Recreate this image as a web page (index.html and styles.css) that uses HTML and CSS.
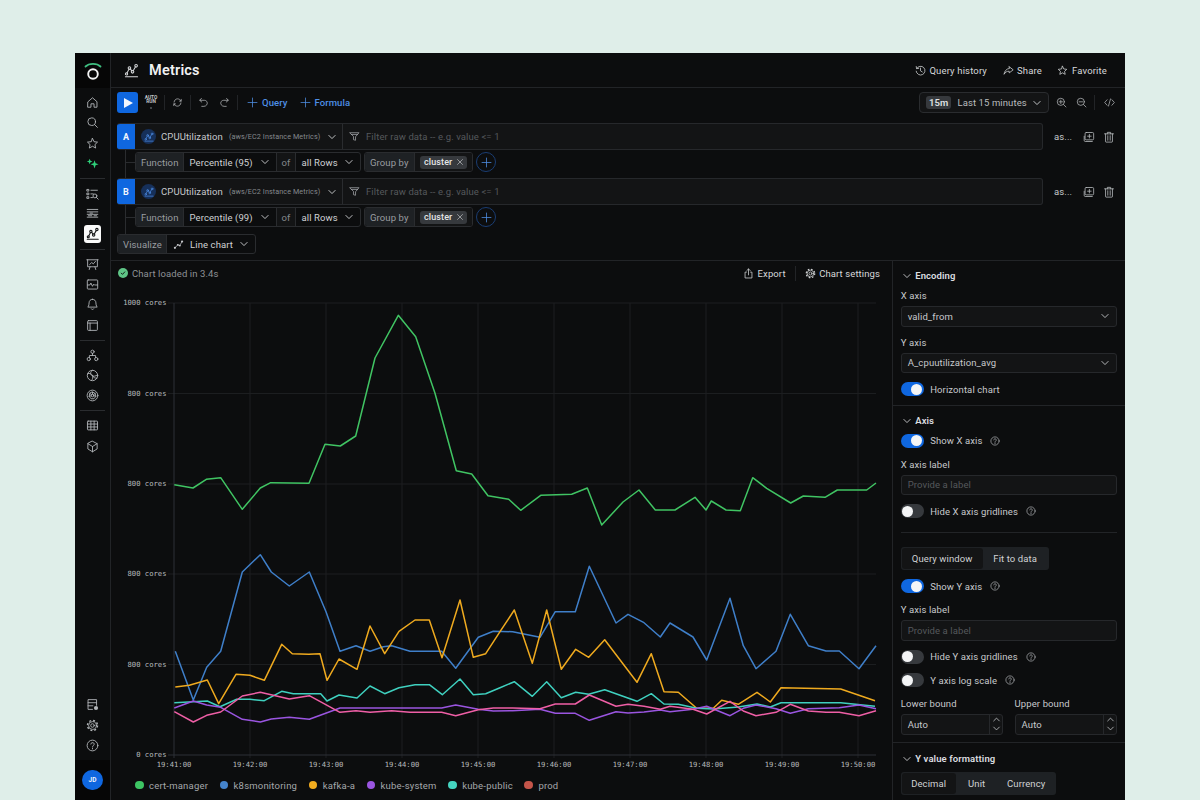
FILE: index.html
```html
<!DOCTYPE html>
<html lang="en">
<head>
<meta charset="utf-8">
<title>Metrics</title>
<link rel="stylesheet" href="styles.css">
</head>
<body>
<svg class="sprite" xmlns="http://www.w3.org/2000/svg">
  <defs>
    <symbol id="home" viewBox="0 0 16 16"><path d="M2.500 7 8 2.200 13.500 7v6.800H9.900V9.600H6.100v4.200H2.500z"/></symbol>
    <symbol id="search" viewBox="0 0 16 16"><circle cx="7" cy="7" r="4.700"/><path d="M10.500 10.500 14 14"/></symbol>
    <symbol id="star" viewBox="0 0 16 16"><path d="M8 1.800l1.900 4 4.300.5-3.200 3 .9 4.300L8 11.400l-3.900 2.200.9-4.300-3.200-3 4.300-.5z"/></symbol>
    <symbol id="sparkle" viewBox="0 0 16 16"><path class="solid" d="M10.500 4l1.300 3.700 3.700 1.300-3.700 1.300-1.300 3.700-1.300-3.700L5.500 9l3.700-1.300z"/><path class="solid" d="M4.500 2l1 2.500 2.500 1-2.500 1-1 2.500-1-2.500-2.500-1 2.500-1z"/></symbol>
    <symbol id="listsearch" viewBox="0 0 16 16"><path d="M1.500 3h2v2h-2zM1.500 7.500h2v2h-2zM1.500 12h2v2h-2zM6 4h8M6 8.500h3M6 13h2"/><circle cx="11" cy="11" r="2.400"/><path d="M12.800 12.800 15 15"/></symbol>
    <symbol id="rows" viewBox="0 0 16 16"><path d="M1.500 3h13M1.500 6h13M1.500 9h13M1.500 12.500h13M5 7.500h3M10 10.800h3M3 10.800h4"/></symbol>
    <symbol id="metrics" viewBox="0 0 16 16"><path d="M1.500 14.600h13M3.200 10.600 5.200 6.800M6.600 6.200l1.800 2.200M9.800 8.200l2.300-3.900"/><circle cx="2.700" cy="11.600" r="1.200"/><circle cx="5.800" cy="5.400" r="1.400"/><circle cx="9.100" cy="9.400" r="1.400"/><circle cx="12.900" cy="3" r="1.400"/></symbol>
    <symbol id="present" viewBox="0 0 16 16"><path d="M1 2.200h14M2 2.200v8.600h12V2.200M5 10.800 4 14.200M11 10.800l1 3.400M4.500 8l2.500-2.400 2 1.600 2.600-3"/></symbol>
    <symbol id="pulse" viewBox="0 0 16 16"><rect x="1.600" y="2.400" width="12.800" height="11.200" rx="1"/><path d="M1.800 8.600h3l1.200-2.400 2 4 1.400-2.600 1 1h3.800"/></symbol>
    <symbol id="bell" viewBox="0 0 16 16"><path d="M8 1.600c-2.700 0-4.200 2-4.200 4.400 0 3.600-1.600 5.200-1.600 5.200h11.600S12.200 9.600 12.200 6C12.200 3.600 10.700 1.600 8 1.600zM6.400 13.400c.3 1 2.900 1 3.200 0"/></symbol>
    <symbol id="panel" viewBox="0 0 16 16"><rect x="2" y="2" width="12" height="12" rx="1"/><path d="M2 5h12M5 5v9"/></symbol>
    <symbol id="tree" viewBox="0 0 16 16"><circle cx="8" cy="3.400" r="2"/><circle cx="3.400" cy="12.400" r="2"/><circle cx="12.600" cy="12.400" r="2"/><path d="M8 5.400v2.600M4.200 10.600V8h7.600v2.600"/></symbol>
    <symbol id="swirl" viewBox="0 0 16 16"><circle cx="8" cy="8" r="6.400"/><path d="M8 1.600c-3 2-3 5-1 6.400s5 1 6.900-.6M2.200 5.600c2.400-.6 5 .4 5.800 2.400s.4 4.800-1.400 6.300M13.500 11.300c-2.500.4-4.500-1-5.500-3.300"/></symbol>
    <symbol id="kube" viewBox="0 0 16 16"><circle cx="8" cy="8" r="6.600"/><path d="M8 3.800 11.300 5.400 12.100 9 9.800 12H6.200L3.900 9l.8-3.600z"/><circle cx="8" cy="8" r="1.600"/><path d="M8 3.800v2.600M4.700 5.400l2 1.600M11.300 5.400l-2 1.600M3.900 9l2.600-.6M12.100 9l-2.600-.6"/></symbol>
    <symbol id="grid" viewBox="0 0 16 16"><rect x="1.800" y="2.600" width="12.400" height="10.800" rx=".8"/><path d="M1.800 6.200h12.400M1.800 9.800h12.400M6 2.600v10.800M10 2.600v10.800"/></symbol>
    <symbol id="cube" viewBox="0 0 16 16"><path d="M8 1.500 13.700 4.500V11L8 14.500 2.300 11V4.500zM2.300 4.500 8 8l5.700-3.500M8 8v6.500"/></symbol>
    <symbol id="dbgear" viewBox="0 0 16 16"><path d="M8 14H2.500V2h10.500v7M2.500 5.800H13M2.500 9.600h6"/><circle class="solid" cx="12.300" cy="12.300" r="2.600"/></symbol>
    <symbol id="gear" viewBox="0 0 16 16"><circle cx="8" cy="8" r="2.200"/><circle cx="8" cy="8" r="4.800"/><circle class="teeth" cx="8" cy="8" r="6.200"/></symbol>
    <symbol id="help" viewBox="0 0 16 16"><circle cx="8" cy="8" r="6.600"/><path d="M5.900 6.200C6 3.800 10.100 3.900 10.100 6.300 10.100 8 8 8 8 9.700M8 11.300v.9"/></symbol>
    <symbol id="refresh" viewBox="0 0 16 16"><path d="M13 6C12 3.600 10 2.700 8 2.700 5.400 2.700 3.200 4.800 3 7.400M3 10C4 12.400 6 13.300 8 13.300c2.600 0 4.800-2.100 5-4.700M11 6h2.400V3.400M5 10H2.600v2.600"/></symbol>
    <symbol id="undo" viewBox="0 0 16 16"><path d="M5 2 2.500 4.800 5.500 7.400M2.800 4.800h6.400c6 .2 5.600 8.400-.6 8.800H5.500"/></symbol>
    <symbol id="redo" viewBox="0 0 16 16"><path d="M11 2l2.500 2.800-3 2.600M13.200 4.800H6.800c-6 .2-5.600 8.400.6 8.800h3.100"/></symbol>
    <symbol id="plus" viewBox="0 0 16 16"><path d="M8 1.500v13M1.500 8h13"/></symbol>
    <symbol id="chev" viewBox="0 0 16 16"><path d="M3 5.500 8 10.500l5-5"/></symbol>
    <symbol id="filter" viewBox="0 0 16 16"><path d="M1.500 2.500h13L9.500 8.400v5.100l-3-.9V8.400z"/><path d="M3.500 5h9"/></symbol>
    <symbol id="chartglyph" viewBox="0 0 16 16"><path d="M3 12.500 7 8.500l2.500 1 3.500-5"/><circle class="solid" cx="2.800" cy="12.800" r="1.600"/><circle class="solid" cx="7" cy="8.500" r="1.400"/><circle class="solid" cx="10" cy="9.600" r="1.400"/><circle class="solid" cx="13.200" cy="3.600" r="1.600"/></symbol>
    <symbol id="history" viewBox="0 0 16 16"><path d="M2.500 5A6.400 6.400 0 1 1 1.700 9M1.800 2.200 2.300 5.300l3.100-.4M8 4.500v4l2.600 1.600"/></symbol>
    <symbol id="share" viewBox="0 0 16 16"><path d="M9 2.500 14.800 7 9 11.500V9C5.500 9 3.300 10.500 1.500 13.500 2 9.500 4.500 5.500 9 5z"/></symbol>
    <symbol id="zoomin" viewBox="0 0 16 16"><circle cx="7" cy="7" r="5.200"/><path d="M11 11l3.500 3.500M4.500 7h5M7 4.500v5"/></symbol>
    <symbol id="zoomout" viewBox="0 0 16 16"><circle cx="7" cy="7" r="5.200"/><path d="M11 11l3.500 3.500M4.500 7h5"/></symbol>
    <symbol id="code" viewBox="0 0 16 16"><path d="M4.500 4 1 8l3.500 4M11.500 4 15 8l-3.500 4M9.500 2.800 6.500 13.200"/></symbol>
    <symbol id="clone" viewBox="0 0 16 16"><rect x="2.800" y="2" width="11.400" height="9.800" rx="1.500"/><path d="M1.600 7v5.600c0 .8.500 1.400 1.300 1.400h9.500M8.500 4.500v4.800M6.100 6.900h4.800"/></symbol>
    <symbol id="trash" viewBox="0 0 16 16"><path d="M2 3.800h12M5.800 3.800V1.800h4.400v2M3.400 3.800v10.400c0 .4.300.6.600.6h8c.3 0 .6-.2.600-.6V3.800M6.400 6.300v6M9.600 6.300v6"/></symbol>
    <symbol id="close" viewBox="0 0 16 16"><path d="M3 3 13 13M13 3 3 13"/></symbol>
    <symbol id="export" viewBox="0 0 16 16"><path d="M5 6H3v8.500h10V6h-2M8 10V1.500M5.500 3.800 8 1.300l2.500 2.500"/></symbol>
    <symbol id="check" viewBox="0 0 16 16"><path d="M4.500 8.300 7 10.800l4.500-5"/></symbol>
  </defs>
</svg>

<div class="window">
  <aside class="rail">
    <div class="rail-logo">
      <svg class="logo" viewBox="0 0 18 18"><path class="logo-arc" d="M1.500 4.500C5 1 13 1 16.500 4.500"/><circle class="logo-ring" cx="9" cy="12" r="4.800"/></svg>
    </div>
    <nav class="rail-nav">
      <a class="rail-i"><svg class="ic"><use href="#home"/></svg></a>
      <a class="rail-i"><svg class="ic"><use href="#search"/></svg></a>
      <a class="rail-i"><svg class="ic"><use href="#star"/></svg></a>
      <a class="rail-i green"><svg class="ic"><use href="#sparkle"/></svg></a>
      <div class="rail-sep"></div>
      <a class="rail-i"><svg class="ic"><use href="#listsearch"/></svg></a>
      <a class="rail-i"><svg class="ic"><use href="#rows"/></svg></a>
      <a class="rail-i active"><svg class="ic"><use href="#metrics"/></svg></a>
      <div class="rail-sep"></div>
      <a class="rail-i"><svg class="ic"><use href="#present"/></svg></a>
      <a class="rail-i"><svg class="ic"><use href="#pulse"/></svg></a>
      <a class="rail-i"><svg class="ic"><use href="#bell"/></svg></a>
      <a class="rail-i"><svg class="ic"><use href="#panel"/></svg></a>
      <div class="rail-sep"></div>
      <a class="rail-i"><svg class="ic"><use href="#tree"/></svg></a>
      <a class="rail-i"><svg class="ic"><use href="#swirl"/></svg></a>
      <a class="rail-i"><svg class="ic"><use href="#kube"/></svg></a>
      <div class="rail-sep"></div>
      <a class="rail-i"><svg class="ic"><use href="#grid"/></svg></a>
      <a class="rail-i"><svg class="ic"><use href="#cube"/></svg></a>
      <div class="rail-bottom">
        <a class="rail-i"><svg class="ic"><use href="#dbgear"/></svg></a>
        <a class="rail-i"><svg class="ic"><use href="#gear"/></svg></a>
        <a class="rail-i"><svg class="ic"><use href="#help"/></svg></a>
      </div>
    </nav>
    <div class="rail-user"><span class="avatar">JD</span></div>
  </aside>

  <main class="main">
    <header class="head">
      <svg class="ic head-ic"><use href="#metrics"/></svg>
      <h1 class="title">Metrics</h1>
      <div class="head-actions">
        <a class="act"><svg class="ic"><use href="#history"/></svg>Query history</a>
        <a class="act"><svg class="ic"><use href="#share"/></svg>Share</a>
        <a class="act"><svg class="ic"><use href="#star"/></svg>Favorite</a>
      </div>
    </header>

    <section class="builder">
      <div class="toolbar">
        <button class="play"><span class="play-tri"></span></button>
        <span class="autorun"><span>AUTO<br>RUN</span><i class="autorun-dot"></i></span>
        <span class="tsep"></span>
        <svg class="ic tool refresh"><use href="#refresh"/></svg>
        <span class="tsep"></span>
        <svg class="ic tool undo"><use href="#undo"/></svg>
        <svg class="ic tool redo"><use href="#redo"/></svg>
        <span class="tsep"></span>
        <a class="add first"><svg class="ic"><use href="#plus"/></svg>Query</a>
        <a class="add"><svg class="ic"><use href="#plus"/></svg>Formula</a>
        <div class="tool-right">
          <div class="timepick"><span class="tbadge">15m</span><span class="tlabel">Last 15 minutes</span><svg class="ic chev"><use href="#chev"/></svg></div>
          <svg class="ic tool zin"><use href="#zoomin"/></svg>
          <svg class="ic tool zout"><use href="#zoomout"/></svg>
          <span class="tsep sep-code"></span>
          <svg class="ic tool"><use href="#code"/></svg>
        </div>
      </div>

      <div class="query">
        <div class="qrow">
          <div class="qbox">
            <span class="qletter">A</span>
            <div class="qsource"><span class="qlogo"><svg class="ic"><use href="#metrics"/></svg></span><span class="qname">CPUUtilization</span><span class="qns">(aws/EC2 Instance Metrics)</span><svg class="ic chev"><use href="#chev"/></svg></div>
            <div class="qfilter"><svg class="ic"><use href="#filter"/></svg><span>Filter raw data -- e.g. value &lt;= 1</span></div>
          </div>
          <div class="qactions"><span class="qas">as...</span><svg class="ic"><use href="#clone"/></svg><svg class="ic"><use href="#trash"/></svg></div>
        </div>
        <div class="frow">
          <div class="fgroup fn">
            <span class="flabel f-func">Function</span>
            <span class="fval f-perc">Percentile (95)<svg class="ic chev"><use href="#chev"/></svg></span>
            <span class="fof">of</span>
            <span class="fval f-rows">all Rows<svg class="ic chev"><use href="#chev"/></svg></span>
          </div>
          <div class="fgroup gb">
            <span class="flabel f-group">Group by</span>
            <span class="fchips"><span class="chip">cluster<svg class="ic"><use href="#close"/></svg></span></span>
          </div>
          <span class="addcircle"><svg class="ic"><use href="#plus"/></svg></span>
        </div>
      </div>

      <div class="query">
        <div class="qrow">
          <div class="qbox">
            <span class="qletter">B</span>
            <div class="qsource"><span class="qlogo"><svg class="ic"><use href="#metrics"/></svg></span><span class="qname">CPUUtilization</span><span class="qns">(aws/EC2 Instance Metrics)</span><svg class="ic chev"><use href="#chev"/></svg></div>
            <div class="qfilter"><svg class="ic"><use href="#filter"/></svg><span>Filter raw data -- e.g. value &lt;= 1</span></div>
          </div>
          <div class="qactions"><span class="qas">as...</span><svg class="ic"><use href="#clone"/></svg><svg class="ic"><use href="#trash"/></svg></div>
        </div>
        <div class="frow">
          <div class="fgroup fn">
            <span class="flabel f-func">Function</span>
            <span class="fval f-perc">Percentile (99)<svg class="ic chev"><use href="#chev"/></svg></span>
            <span class="fof">of</span>
            <span class="fval f-rows">all Rows<svg class="ic chev"><use href="#chev"/></svg></span>
          </div>
          <div class="fgroup gb">
            <span class="flabel f-group">Group by</span>
            <span class="fchips"><span class="chip">cluster<svg class="ic"><use href="#close"/></svg></span></span>
          </div>
          <span class="addcircle"><svg class="ic"><use href="#plus"/></svg></span>
        </div>
      </div>

      <div class="vizrow">
        <div class="fgroup viz">
          <span class="flabel f-viz">Visualize</span>
          <span class="fval f-line"><svg class="ic glyph"><use href="#chartglyph"/></svg>Line chart<svg class="ic chev"><use href="#chev"/></svg></span>
        </div>
      </div>
    </section>

    <div class="content">
      <section class="chart">
        <div class="chart-head">
          <span class="okdot"><svg class="ic"><use href="#check"/></svg></span>
          <span class="okmsg">Chart loaded in 3.4s</span>
          <div class="chart-actions">
            <a class="act"><svg class="ic"><use href="#export"/></svg>Export</a>
            <span class="tsep"></span>
            <a class="act"><svg class="ic"><use href="#gear"/></svg>Chart settings</a>
          </div>
        </div>
        <svg class="plot" viewBox="111 287 781 483" xmlns="http://www.w3.org/2000/svg">
          <g class="gridlines">
            <path d="M168 303H876M168 393.500H876M168 484H876M168 574H876M168 664.500H876"/>
            <path d="M250 303V758M326 303V758M402 303V758M478 303V758M554 303V758M630 303V758M706 303V758M782 303V758M858 303V758"/>
          </g>
          <path class="axis" d="M174 303V758M168 755H876"/>
          <g class="ylab">
            <text x="166.500" y="305.300">1000 cores</text>
            <text x="166.500" y="395.800">800 cores</text>
            <text x="166.500" y="486.300">800 cores</text>
            <text x="166.500" y="576.300">800 cores</text>
            <text x="166.500" y="666.800">800 cores</text>
            <text x="166.500" y="757.300">0 cores</text>
          </g>
          <g class="xlab">
            <text x="174" y="766.500">19:41:00</text>
            <text x="250" y="766.500">19:42:00</text>
            <text x="326" y="766.500">19:43:00</text>
            <text x="402" y="766.500">19:44:00</text>
            <text x="478" y="766.500">19:45:00</text>
            <text x="554" y="766.500">19:46:00</text>
            <text x="630" y="766.500">19:47:00</text>
            <text x="706" y="766.500">19:48:00</text>
            <text x="782" y="766.500">19:49:00</text>
            <text x="858" y="766.500">19:50:00</text>
          </g>
          <polyline class="s s-green" points="174.300,484.700 193,488 206.300,479.300 220.700,477.700 242.300,509.300 260.300,488 270.700,482.700 309,483.300 325,444.300 340.300,446 355.700,436 375,358 398.300,315.300 415.700,336.700 435,393.300 456.300,470.700 471.700,474 488,495.700 508.700,499.300 520.700,510.300 540.700,495.300 571.700,494.300 587.300,488 601.700,525 623,502 639,490 655.300,510 675,510 695,497.300 706,510 711.300,501 726,510 740.300,510.700 752.700,477.700 766.700,488.300 790.700,503 803.300,496 825,497.300 837.300,490 866.700,490 876,483"/>
          <polyline class="s s-blue" points="175.300,651.300 193.300,700 206.700,667.300 220.700,651.300 242.300,572 260.300,554.700 271.300,572 289.300,586 309.300,572 326,611.700 340,651.300 356,645.700 370,651.300 383.300,646.700 391.700,645.700 410,651.300 441.700,651.300 455.700,668.300 478.300,637.300 493.300,631.300 512.700,631.700 540,637.300 555.300,611.700 575.300,611.700 589.300,566.300 616,623 628,614.300 644,622.700 660.300,637 670,623 693,637 706.700,660 730,598.300 743.300,645.700 756,668.700 776,651.300 790.300,614.300 808.300,645.700 826,651 839.300,651 859,668.700 876,645.700"/>
          <polyline class="s s-orange" points="175.300,687 189.300,685.300 207.300,680 218.700,703.700 236,674.300 250,675.300 264.300,680.300 281.700,644.300 292.300,653.700 308.700,654.300 320,653.700 327,680.300 339,659 357,669.300 370,626 384.700,653.700 399,631.300 415,620 429.300,620 442,657.700 460,600 473.300,657.300 485.700,653.700 500,631.700 514.300,610 532.300,663.300 546.700,610 561.300,669.300 575.700,649.300 588.700,657.300 604.700,639.700 637,682.300 651.300,653.700 664,691.700 678.300,692.300 696.700,708.300 713.300,708.300 721.700,700.300 738.300,704.300 757,692.300 770.300,702 781,687.700 840.700,689 875,700.700"/>
          <polyline class="s s-teal" points="174.300,702.700 207.300,701 220,706.700 236.700,699.300 250,699.300 264.300,700.700 281.700,691.300 293.300,693.700 320.700,693.700 327,701 339,695 357,698 370,686 384.700,693.700 399,687.700 415,684.700 429.300,684.700 442.300,694.700 460,679 473.300,694.700 485.700,693.700 500,687.700 514.300,681.700 532.300,696.300 546.700,681.700 561.300,697.700 575.700,692.300 588.700,694.300 604.700,689.700 637,701.300 651.300,693.700 664,704 678.300,704.300 696.700,708.300 713.300,709 738.300,707 757,704 770.300,707 781,702.700 840.700,702.700 875,706.300"/>
          <polyline class="s s-purple" points="174.300,708 193.300,701 206.700,705 220.700,707.300 242.300,719.300 260.300,722 271.300,719 289.300,717.300 309.300,719.300 340,708 370,708 441.700,708 455.700,705 478.300,709.300 493.300,711 512.700,710.700 540,709.300 555.300,713.300 575.300,713.300 589.300,720.300 616,711.700 628,713 644,712 660.300,710 670,711.700 693,709.300 706.700,706.300 730,715.700 743.300,708.300 756,705 776,708.700 790.300,713.300 808.300,708.700 839.300,707.700 859,705 876,708.700"/>
          <polyline class="s s-pink" points="174.300,711.700 193.300,722 206.700,715.300 220.700,712 242.300,696 260.300,692.300 289.300,699 309.300,695.700 340,712.300 356,710.700 370,712.300 391.700,710.700 410,712.300 441.700,712.300 455.700,715.700 478.300,709.700 493.300,708 512.700,708 540,708.700 555.300,704 575.300,704 589.300,695 616,706.300 628,704.300 644,706.300 660.300,709.300 670,706.300 693,709.300 706.700,714 730,701.300 743.300,711 756,715.700 776,712.300 790.300,704.300 808.300,711 826,712.300 839.300,712.300 859,715.700 876,710.700"/>
        </svg>
        <ul class="legend">
          <li class="lg"><i class="dot d-green"></i>cert-manager</li>
          <li class="lg"><i class="dot d-blue"></i>k8smonitoring</li>
          <li class="lg"><i class="dot d-orange"></i>kafka-a</li>
          <li class="lg"><i class="dot d-purple"></i>kube-system</li>
          <li class="lg"><i class="dot d-teal"></i>kube-public</li>
          <li class="lg"><i class="dot d-red"></i>prod</li>
        </ul>
      </section>

      <aside class="panel">
        <section class="psec enc">
          <h2 class="ph"><svg class="ic"><use href="#chev"/></svg>Encoding</h2>
          <label class="fl mt-x">X axis</label>
          <div class="sel">valid_from<svg class="ic"><use href="#chev"/></svg></div>
          <label class="fl mt-y">Y axis</label>
          <div class="sel">A_cpuutilization_avg<svg class="ic"><use href="#chev"/></svg></div>
          <div class="tog-row mt-h"><span class="tog on"></span>Horizontal chart</div>
        </section>
        <section class="psec axis-sec">
          <h2 class="ph"><svg class="ic"><use href="#chev"/></svg>Axis</h2>
          <div class="tog-row mt-sx"><span class="tog on"></span>Show X axis<svg class="ic qm"><use href="#help"/></svg></div>
          <label class="fl mt-xl">X axis label</label>
          <div class="inp">Provide a label</div>
          <div class="tog-row mt-hx"><span class="tog"></span>Hide X axis gridlines<svg class="ic qm"><use href="#help"/></svg></div>
          <div class="rule"></div>
          <div class="seg seg-q"><span class="seg-i cur s-qw">Query window</span><span class="seg-i s-fit">Fit to data</span></div>
          <div class="tog-row mt-sy"><span class="tog on"></span>Show Y axis<svg class="ic qm"><use href="#help"/></svg></div>
          <label class="fl mt-yl">Y axis label</label>
          <div class="inp">Provide a label</div>
          <div class="tog-row mt-hy"><span class="tog"></span>Hide Y axis gridlines<svg class="ic qm"><use href="#help"/></svg></div>
          <div class="tog-row mt-log"><span class="tog"></span>Y axis log scale<svg class="ic qm"><use href="#help"/></svg></div>
          <div class="bounds">
            <div class="bound">
              <label class="fl">Lower bound</label>
              <div class="num"><span class="num-v">Auto</span><span class="step"><svg class="ic"><use href="#chev"/></svg><svg class="ic"><use href="#chev"/></svg></span></div>
            </div>
            <div class="bound">
              <label class="fl">Upper bound</label>
              <div class="num"><span class="num-v">Auto</span><span class="step"><svg class="ic"><use href="#chev"/></svg><svg class="ic"><use href="#chev"/></svg></span></div>
            </div>
          </div>
        </section>
        <section class="psec fmt">
          <h2 class="ph"><svg class="ic"><use href="#chev"/></svg>Y value formatting</h2>
          <div class="seg seg-f"><span class="seg-i cur s-dec">Decimal</span><span class="seg-i s-unit">Unit</span><span class="seg-i s-cur">Currency</span></div>
        </section>
      </aside>
    </div>
  </main>
</div>
</body>
</html>
```

FILE: styles.css
```css
* { box-sizing: border-box; }
html, body { margin: 0; height: 800px; overflow: hidden; }
body {
  background: #dfeee9;
  padding: 53px 75px 0;
  font-family: Roboto, "Noto Sans", sans-serif;
  font-size: 9.500px;
  letter-spacing: .1px;
  color: #d6d8da;
}
.sprite { position: absolute; width: 0; height: 0; }
.ic { width: 12px; height: 12px; fill: none; stroke: currentColor; stroke-width: 1.100; stroke-linecap: round; stroke-linejoin: round; flex: none; display: block; }
.solid { fill: currentColor; stroke: none; }
.teeth { stroke-width: 1.700; stroke-dasharray: 2.400 2.470; stroke-linecap: butt; }

.window { display: flex; height: 747px; background: #0c0d0e; }

/* rail */
.rail { width: 36px; flex: none; display: flex; flex-direction: column; border-right: 1px solid #222427; background: #0c0d0e; }
.rail-logo { height: 35px; flex: none; background: #060606; display: flex; justify-content: center; align-items: center; }
.logo { width: 18px; height: 18px; fill: none; }
.logo-arc { stroke: #3fbf80; stroke-width: 1.800; stroke-linecap: round; }
.logo-ring { stroke: #f2f3f3; stroke-width: 1.900; }
.rail-nav { flex: 1; display: flex; flex-direction: column; align-items: center; padding-top: 4.500px; }
.rail-i { width: 35px; height: 20.300px; display: flex; align-items: center; justify-content: center; color: #b3b6b9; flex: none; }
.rail-i .ic { width: 13px; height: 13px; }
.rail-i.green { color: #2fd07a; }
.rail-i.active .ic { background: #fafafa; color: #141516; width: 17.500px; height: 17.500px; padding: 2px; border-radius: 3px; stroke-width: 1.300; }
.rail-sep { width: 25px; height: 1px; background: #2a2c2f; margin: 4.400px 0; flex: none; }
.rail-bottom { margin-top: auto; margin-bottom: 4.500px; }
.rail-user { height: 40px; flex: none; background: #060606; display: flex; align-items: center; justify-content: center; }
.avatar { width: 20.500px; height: 20.500px; border-radius: 50%; background: #0f67e0; color: #eef3fb; font-size: 6.500px; font-weight: 700; display: flex; align-items: center; justify-content: center; }

/* main */
.main { flex: 1; min-width: 0; display: flex; flex-direction: column; }
.head { height: 35px; flex: none; display: flex; align-items: center; padding: 0 18px 0 13px; border-bottom: 1px solid #222427; }
.head-ic { width: 15px; height: 15px; color: #d6d8da; }
.title { margin: 1px 0 0 10px; font-size: 14.500px; font-weight: 600; letter-spacing: .2px; color: #f0f1f2; }
.head-actions { margin-left: auto; display: flex; gap: 15.500px; letter-spacing: .15px; }
.act { display: flex; align-items: center; gap: 3.500px; color: #d6d8da; font-size: 9.500px; white-space: nowrap; }
.act .ic { width: 11px; height: 11px; }

/* builder */
.builder { flex: none; height: 173px; padding: 4px 10px 0 6px; border-bottom: 1px solid #222427; }
.toolbar { height: 21px; display: flex; align-items: center; color: #b3b6b9; }
.play { width: 21px; height: 21px; border: 0; border-radius: 3px; background: #0f67e0; padding: 0; display: flex; align-items: center; justify-content: center; }
.play-tri { width: 0; height: 0; border-left: 9px solid #f4f7fd; border-top: 5.500px solid transparent; border-bottom: 5.500px solid transparent; margin-left: 1px; }
.autorun { width: 26px; font-size: 4.800px; font-weight: 700; line-height: 4.600px; text-align: center; color: #c3c5c8; display: flex; flex-direction: column; align-items: center; letter-spacing: 0; }
.autorun-dot { width: 2.500px; height: 2.500px; border-radius: 50%; background: #55585c; margin-top: 2px; }
.tsep { width: 1px; height: 15px; background: #222427; flex: none; }
.tool { width: 11px; height: 11px; }
.refresh { margin: 0 7px; }
.undo { margin: 0 10px 0 7px; }
.redo { margin-right: 7px; }
.add { display: flex; align-items: center; gap: 4px; color: #4f8fe6; font-weight: 500; font-size: 9.500px; margin-right: 12px; }
.add.first { margin-left: 9px; }
.add .ic { width: 11px; height: 11px; }
.tool-right { margin-left: auto; display: flex; align-items: center; }
.timepick { width: 130px; height: 21px; border: 1px solid #2a2c2f; border-radius: 4px; background: #131415; display: flex; align-items: center; padding: 0 6px; margin-right: 7px; color: #b9bcbf; }
.tbadge { background: #36393d; color: #dfe1e3; border-radius: 3px; padding: 0 3px; height: 13px; line-height: 13px; font-weight: 600; margin-right: 6px; }
.tlabel { flex: 1; white-space: nowrap; }
.chev { width: 10px; height: 10px; color: #d6d8da; stroke-width: 1.400; }
.zin { margin-right: 9px; }
.zout { margin-right: 7px; }
.sep-code { margin-right: 9px; }

/* query */
.query { position: relative; margin-top: 10px; }
.query + .query { margin-top: 6px; }
.qrow { display: flex; height: 27px; }
.qbox { flex: 1; display: flex; border: 1px solid #26282b; border-left: 0; border-radius: 3px; background: #131415; overflow: hidden; }
.qletter { width: 18px; flex: none; background: #0f67e0; color: #f2f6fd; font-size: 9px; font-weight: 700; display: flex; align-items: center; justify-content: center; }
.qsource { width: 208px; flex: none; display: flex; align-items: center; padding: 0 5px 0 6px; border-right: 1px solid #2a2c2f; }
.qlogo { width: 15px; height: 15px; border-radius: 50%; background: #16305a; color: #4f8fe6; display: flex; align-items: center; justify-content: center; margin-right: 5px; }
.qlogo .ic { width: 10px; height: 10px; }
.qname { color: #c7c9cc; font-size: 9.500px; }
.qns { color: #85898d; font-size: 7.200px; margin-left: 6px; white-space: nowrap; }
.qsource .chev { margin-left: auto; }
.qfilter { flex: 1; display: flex; align-items: center; gap: 6px; padding-left: 6px; color: #55585c; font-size: 9.500px; white-space: nowrap; }
.qfilter .ic { width: 11px; height: 11px; color: #a5a8ab; }
.qactions { width: 72px; flex: none; display: flex; align-items: center; padding-left: 11px; color: #b3b6b9; }
.qas { width: 29px; color: #c7c9cc; }
.qactions .ic { width: 12px; height: 12px; margin-right: 8px; }
.qactions .ic:last-child { margin-right: 0; }
.frow { position: relative; display: flex; align-items: center; margin: 2px 0 0 18px; height: 20px; }
.frow::before { content: ""; position: absolute; left: -10px; top: -2px; width: 10px; height: 12px; border-left: 1px solid #2a2c2f; border-bottom: 1px solid #2a2c2f; }
.query::after { content: ""; position: absolute; left: 8px; top: 27px; height: 100%; border-left: 1px solid #2a2c2f; }
.query + .query::after { height: 29px; }
.fgroup { display: flex; height: 20px; border: 1px solid #2a2c2f; border-radius: 3px; overflow: hidden; background: #0c0d0e; }
.fn { width: 226px; }
.gb { width: 109px; margin-left: 3px; }
.flabel { background: #1e2124; color: #9a9da1; display: flex; align-items: center; padding-left: 5px; flex: none; border-right: 1px solid #2a2c2f; }
.f-func { width: 48px; }
.f-group { width: 50px; }
.f-viz { width: 49px; }
.fval { display: flex; align-items: center; color: #d0d2d4; padding: 0 6px 0 5.500px; justify-content: space-between; flex: none; }
.f-perc { width: 92px; }
.f-rows { flex: 1; }
.fof { width: 20px; flex: none; display: flex; align-items: center; justify-content: center; background: #131415; color: #85898d; border: solid #2a2c2f; border-width: 0 1px; }
.fchips { flex: 1; display: flex; align-items: center; padding-left: 5px; background: #131415; }
.chip { height: 13px; width: 47px; border-radius: 3px; background: #36393d; color: #e4e5e7; font-weight: 500; display: flex; align-items: center; justify-content: space-between; padding: 0 3px 0 4px; font-size: 9px; }
.chip .ic { width: 8px; height: 8px; }
.addcircle { width: 20px; height: 20px; margin-left: 3px; border-radius: 50%; border: 1px solid #1a3d73; color: #4f8fe6; display: flex; align-items: center; justify-content: center; }
.addcircle .ic { width: 11px; height: 11px; }
.vizrow { margin-top: 7px; }
.viz { width: 139px; }
.f-line { flex: 1; color: #d0d2d4; padding-left: 6px; gap: 6px; }
.f-line .chev { margin-left: auto; }
.glyph { width: 11px; height: 11px; color: #c7c9cc; }

/* content */
.content { flex: 1; min-height: 0; display: flex; }
.chart { flex: 1; min-width: 0; display: flex; flex-direction: column; }
.chart-head { height: 26px; flex: none; display: flex; align-items: center; padding: 0 12px 2px 7px; }
.okdot { width: 10px; height: 10px; border-radius: 50%; background: #5fc587; color: #0c0d0e; display: flex; align-items: center; justify-content: center; }
.okdot .ic { width: 8px; height: 8px; stroke-width: 1.800; }
.okmsg { margin-left: 4px; color: #8f9296; }
.chart-actions { margin-left: auto; display: flex; align-items: center; gap: 9px; }
.plot { display: block; width: 781px; height: 483px; flex: none; }
.gridlines path { stroke: #1c1e20; stroke-width: 1; fill: none; }
.axis { stroke: #2c3036; stroke-width: 1; fill: none; }
.ylab text, .xlab text { font-family: "DejaVu Sans Mono", monospace; font-size: 7.200px; letter-spacing: 0; fill: #b8babd; }
.ylab text { text-anchor: end; }
.xlab text { text-anchor: middle; }
.s { fill: none; stroke-width: 1.500; stroke-linejoin: round; }
.s-green { stroke: #40c463; }
.s-blue { stroke: #3f7fc9; }
.s-orange { stroke: #efaa1f; }
.s-teal { stroke: #3fd0bf; }
.s-purple { stroke: #9a55e0; }
.s-pink { stroke: #ef5fa6; }
.legend { list-style: none; margin: 0; padding: 0 0 0 24px; flex: 1; display: flex; align-items: center; gap: 11.500px; letter-spacing: .2px; }
.lg { display: flex; align-items: center; gap: 5.500px; color: #a5a8ab; font-size: 9.500px; }
.dot { width: 8.500px; height: 8.500px; border-radius: 50%; }
.d-green { background: #3dc463; }
.d-blue { background: #4584cc; }
.d-orange { background: #f2ac1f; }
.d-purple { background: #9a55e0; }
.d-teal { background: #45d4c0; }
.d-red { background: #c4554a; }

/* panel */
.panel { width: 233px; flex: none; border-left: 1px solid #222427; overflow: hidden; }
.psec { padding: 7.500px 8px 0 7.700px; border-bottom: 1px solid #222427; }
.psec.enc { height: 145px; }
.psec.axis-sec { height: 337px; }
.psec.fmt { border-bottom: 0; padding-top: 8.500px; }
.ph { margin: 0; height: 14px; display: flex; align-items: center; gap: 3.500px; font-size: 9.500px; font-weight: 600; color: #dcdee0; }
.ph .ic { width: 10px; height: 10px; margin-left: 1px; stroke-width: 1.300; }
.fl { display: block; height: 12px; line-height: 12px; color: #c7c9cc; font-size: 9.500px; }
.sel, .inp, .num { height: 20.500px; border: 1px solid #26282b; border-radius: 3px; background: #131415; display: flex; align-items: center; padding: 0 6px; }
.sel { justify-content: space-between; color: #c7c9cc; margin-top: 4px; }
.sel .ic { width: 10px; height: 10px; stroke-width: 1.400; }
.inp { color: #55585c; margin-top: 4px; }
.tog-row { display: flex; align-items: center; height: 14px; color: #c7c9cc; }
.tog { width: 23px; height: 14px; border-radius: 7px; background: #36393d; position: relative; margin-right: 6.500px; flex: none; }
.tog::after { content: ""; position: absolute; top: 1.500px; left: 1.500px; width: 11px; height: 11px; border-radius: 50%; background: #f4f5f6; }
.tog.on { background: #0f67e0; }
.tog.on::after { left: 10.500px; }
.qm { width: 10px; height: 10px; margin-left: 8px; color: #b3b6b9; }
.mt-x { margin-top: 7.500px; }
.mt-y { margin-top: 10px; }
.mt-h { margin-top: 9px; }
.mt-sx { margin-top: 6px; }
.mt-xl { margin-top: 11px; }
.mt-hx { margin-top: 9px; }
.rule { height: 1px; background: #222427; margin-top: 14px; }
.seg { display: flex; height: 23px; background: #1e2124; border-radius: 3px; padding: 1px; align-items: stretch; color: #d0d2d4; font-size: 9.500px; }
.seg-q { width: 148px; margin-top: 14px; }
.seg-f { width: 155px; margin-top: 6px; }
.seg-i { display: flex; align-items: center; justify-content: center; }
.seg-i.cur { background: #131415; border-radius: 3px; }
.s-qw { width: 81px; }
.s-fit { flex: 1; }
.s-dec { width: 54px; }
.s-unit { width: 42px; }
.s-cur { flex: 1; }
.mt-sy { margin-top: 9px; }
.mt-yl { margin-top: 11px; }
.mt-hy { margin-top: 9px; }
.mt-log { margin-top: 9.500px; }
.bounds { display: flex; gap: 11.500px; margin-top: 11px; }
.bound { flex: 1; }
.num { margin-top: 4px; padding: 0 0 0 6px; justify-content: space-between; color: #c7c9cc; }
.step { width: 13px; height: 100%; border-left: 1px solid #26282b; display: flex; flex-direction: column; justify-content: center; }
.step .ic { width: 9px; height: 9px; margin: 0 auto; stroke-width: 1.400; }
.step .ic:first-child { transform: rotate(180deg); }
```
